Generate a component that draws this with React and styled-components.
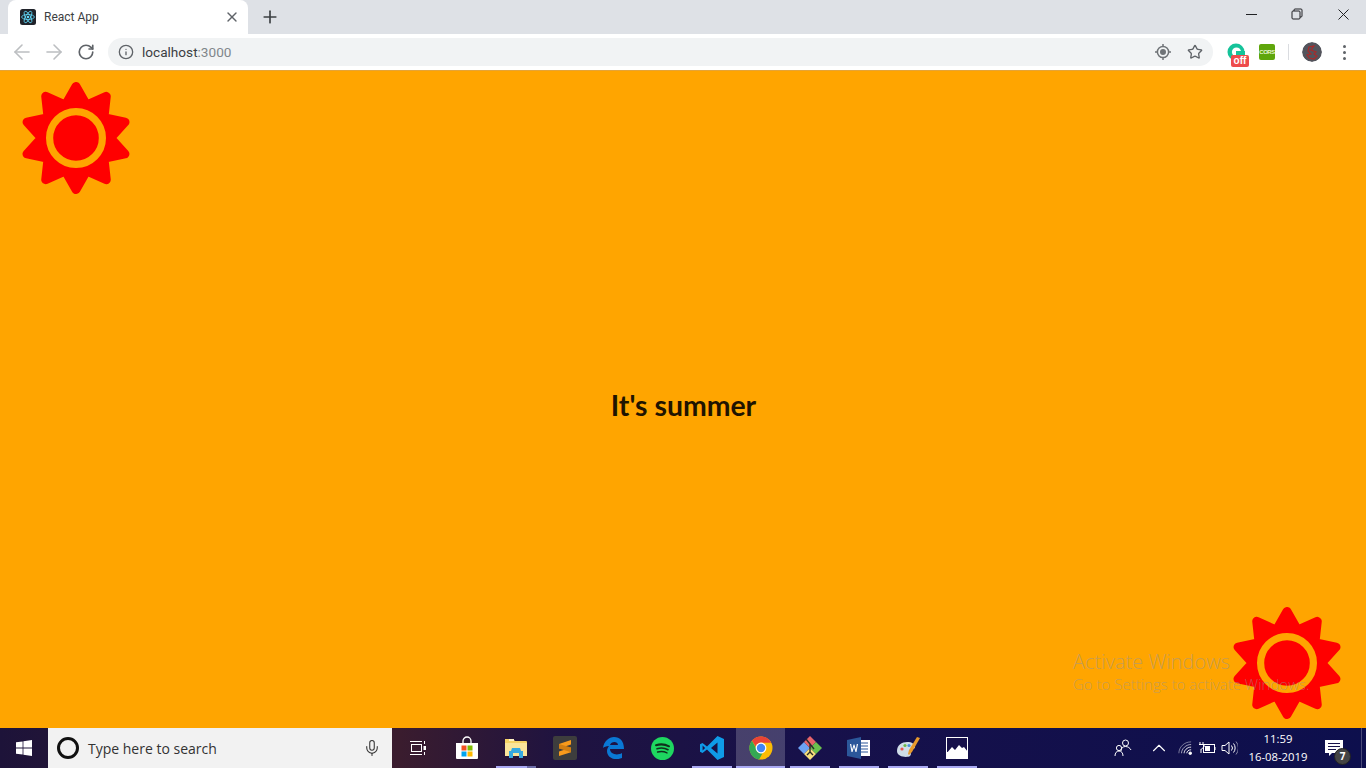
import React from 'react';
import styled, { createGlobalStyle } from 'styled-components';
import { ArrowLeft, ArrowRight, RotateCw, Info, Star, X, Plus, Mic, ChevronUp } from 'lucide-react';

const GlobalStyle = createGlobalStyle`
  html, body, #root {
    margin: 0;
    height: 100%;
    overflow: hidden;
  }
  body {
    font-family: "Open Sans", "Noto Sans", sans-serif;
  }
`;

const Screen = styled.div`
  height: 768px;
  display: flex;
  flex-direction: column;
`;

/* browser chrome */
const TabStrip = styled.div`
  height: 34px;
  flex: none;
  display: flex;
  align-items: center;
  padding-left: 8px;
  background: #dee1e6;
`;
const Tab = styled.div`
  position: relative;
  width: 240px;
  height: 34px;
  box-sizing: border-box;
  display: flex;
  align-items: center;
  gap: 8px;
  padding: 0 8px 0 12px;
  background: #fff;
  border-radius: 8px 8px 0 0;
`;
const TabTitle = styled.span`
  font-family: Roboto, sans-serif;
  font-size: 12px;
  color: #3c4043;
`;
const TabClose = styled.span`
  margin-left: auto;
  display: flex;
  color: #5f6368;
`;
const NewTab = styled.span`
  display: flex;
  margin-left: 12px;
  color: #3c4043;
`;
const WindowControls = styled.div`
  margin-left: auto;
  display: flex;
  align-self: stretch;
`;
const WindowButton = styled.div`
  width: 46px;
  display: flex;
  align-items: center;
  justify-content: center;
  padding-bottom: 6px;
`;
const Toolbar = styled.div`
  height: 36px;
  flex: none;
  box-sizing: border-box;
  display: flex;
  align-items: center;
  padding-left: 6px;
  background: #fff;
`;
const NavButton = styled.div`
  width: 32px;
  display: flex;
  justify-content: center;
  color: ${(p) => (p.$off ? '#bcbec1' : '#5f6368')};
`;
const AddressBar = styled.div`
  flex: 1;
  height: 28px;
  margin-left: 6px;
  display: flex;
  align-items: center;
  gap: 8px;
  padding: 0 10px;
  background: #f1f3f4;
  border-radius: 14px;
  color: #5f6368;
`;
const Url = styled.span`
  font-family: Roboto, sans-serif;
  font-size: 13.6px;
  color: #3c4043;
`;
const UrlPort = styled.span`
  color: #80868b;
`;
const AddressTools = styled.div`
  margin-left: auto;
  display: flex;
  gap: 16px;
  color: #5f6368;
`;
const ToolCluster = styled.div`
  width: 153px;
  flex: none;
  display: flex;
  align-items: center;
  padding-left: 9px;
  box-sizing: border-box;
`;
const ExtSlot = styled.div`
  position: relative;
  width: 28px;
  margin-right: 3px;
  display: flex;
  justify-content: center;
`;
const OffBadge = styled.span`
  position: absolute;
  right: 1px;
  bottom: -6px;
  width: 18px;
  height: 12px;
  border-radius: 2px;
  background: #ee4c4c;
  color: #fff;
  font: bold 10px/12px "Liberation Sans", sans-serif;
  text-align: center;
`;
const CorsBadge = styled.span`
  width: 16px;
  height: 16px;
  display: flex;
  align-items: center;
  justify-content: center;
  border-radius: 2px;
  background: #5fa60b;
  color: #e8f5d0;
  font: bold 6px/16px "Liberation Sans", sans-serif;
  letter-spacing: -0.5px;
`;
const Divider = styled.span`
  width: 1px;
  height: 16px;
  margin: 0 13px 0 4px;
  background: #dadce0;
`;
const Avatar = styled.div`
  width: 20px;
  height: 20px;
  border-radius: 50%;
  overflow: hidden;
  display: flex;
`;
const MenuDots = styled.div`
  margin-left: 21px;
  display: flex;
  flex-direction: column;
  gap: 3px;
`;
const Dot = styled.span`
  width: 3px;
  height: 3px;
  border-radius: 50%;
  background: #5f6368;
`;

/* page */
const Page = styled.main`
  position: relative;
  flex: 1;
  min-height: 0;
  display: grid;
  grid-template-rows: auto 1fr auto;
  padding: 11px 23px 9px 20px;
  background: #ffa500;
  border-top: 1px solid #e4a437;
  box-sizing: border-box;
`;
const SunBox = styled.div`
  display: flex;
  justify-self: ${(p) => p.$side};
`;
const Title = styled.h2`
  align-self: center;
  justify-self: center;
  margin: 8px 0 0 4px;
  font-family: Lato, sans-serif;
  font-size: 28.4px;
  font-weight: 700;
  line-height: 34px;
  color: #1f1400;
`;
const Watermark = styled.div`
  position: absolute;
  left: 1073px;
  top: 578px;
  color: rgba(150, 150, 150, 0.55);
  font-weight: 300;
  white-space: nowrap;
`;
const WatermarkHead = styled.div`
  font-size: 20px;
  line-height: 26px;
`;
const WatermarkSub = styled.div`
  font-size: 15px;
  line-height: 19px;
`;

/* taskbar */
const Taskbar = styled.footer`
  height: 40px;
  flex: none;
  display: flex;
  align-items: center;
  background: linear-gradient(90deg, #1d1339 0, #3a1c2e 400px, #1f1340 560px, #17114a 800px, #0d0f4d 1366px);
`;
const StartButton = styled.div`
  width: 48px;
  display: flex;
  justify-content: center;
`;
const SearchBox = styled.div`
  width: 344px;
  height: 40px;
  box-sizing: border-box;
  display: flex;
  align-items: center;
  gap: 9px;
  padding: 0 11px 0 9px;
  background: #f2f2f2;
  color: #333;
`;
const SearchRing = styled.span`
  width: 22px;
  height: 22px;
  box-sizing: border-box;
  border: 3px solid #111;
  border-radius: 50%;
`;
const SearchText = styled.span`
  font-size: 14px;
  color: #333;
`;
const MicSlot = styled.span`
  margin-left: auto;
  display: flex;
`;
const AppList = styled.div`
  display: flex;
  margin-left: 1px;
`;
const TaskItem = styled.div`
  position: relative;
  width: 49px;
  height: 40px;
  flex: none;
  display: flex;
  align-items: center;
  justify-content: center;
  background: ${(p) => (p.$active ? 'rgba(255,255,255,0.2)' : 'transparent')};
  &::after {
    content: '';
    display: ${(p) => (p.$open ? 'block' : 'none')};
    position: absolute;
    left: ${(p) => (p.$active ? '0' : '5px')};
    right: ${(p) => (p.$active ? '0' : '4px')};
    bottom: 0;
    height: 2px;
    background: ${(p) =>
      p.$stacked ? 'linear-gradient(90deg, #a9a9f2 78%, #6d6da8 78%)' : '#a9a9f2'};
  }
`;
const Tray = styled.div`
  margin-left: auto;
  display: flex;
  align-items: center;
  height: 40px;
  color: #fff;
`;
const TrayItem = styled.div`
  position: relative;
  width: ${(p) => p.$w}px;
  margin-left: ${(p) => p.$ml || 0}px;
  display: flex;
  justify-content: center;
`;
const Clock = styled.div`
  width: 64px;
  margin-left: 5px;
  text-align: center;
  font-size: 11.3px;
  line-height: 18px;
  color: #fff;
`;
const NoticeCount = styled.span`
  position: absolute;
  right: 6px;
  bottom: -9px;
  width: 15px;
  height: 15px;
  border-radius: 50%;
  border: 1px solid #222;
  background: #444;
  color: #fff;
  font: bold 10px/15px "Open Sans", sans-serif;
  text-align: center;
`;
const ShowDesktop = styled.div`
  width: 9px;
  height: 40px;
  box-sizing: border-box;
  position: relative;
  &::before {
    content: '';
    position: absolute;
    left: 4px;
    top: 0;
    bottom: 0;
    width: 1px;
    background: #4a4a78;
  }
`;

// ten pointed sun, corners get rounded by the round stroke
const sunPoints = Array.from({ length: 20 }, (_, i) => {
  const r = i % 2 === 0 ? 51.5 : 34.5;
  const a = ((i * 18 - 90) * Math.PI) / 180;
  return `${(56 + r * Math.cos(a)).toFixed(2)},${(56 + r * Math.sin(a)).toFixed(2)}`;
}).join(' ');

const Sun = () => (
  <svg width="112" height="112" viewBox="0 0 112 112">
    <polygon points={sunPoints} fill="#ff0000" stroke="#ff0000" strokeWidth="9" strokeLinejoin="round" />
    <circle cx="56" cy="56" r="26.4" fill="#ff0000" stroke="#ffa500" strokeWidth="7.2" />
  </svg>
);

const ReactFavicon = () => (
  <svg width="16" height="16" viewBox="0 0 16 16">
    <rect width="16" height="16" rx="2.5" fill="#20232a" />
    <g fill="none" stroke="#61dafb" strokeWidth="0.8">
      <ellipse cx="8" cy="8" rx="6.4" ry="2.5" />
      <ellipse cx="8" cy="8" rx="6.4" ry="2.5" transform="rotate(60 8 8)" />
      <ellipse cx="8" cy="8" rx="6.4" ry="2.5" transform="rotate(120 8 8)" />
    </g>
    <circle cx="8" cy="8" r="1.3" fill="#61dafb" />
  </svg>
);

const MinimizeIcon = () => (
  <svg width="11" height="11" viewBox="0 0 11 11">
    <rect x="0" y="5" width="11" height="1" fill="#202124" />
  </svg>
);

const RestoreIcon = () => (
  <svg width="12" height="12" viewBox="0 0 12 12" fill="none" stroke="#202124" strokeWidth="1">
    <rect x="1" y="3" width="8" height="8" rx="1" />
    <path d="M3 3V2a1 1 0 0 1 1-1h6a1 1 0 0 1 1 1v6a1 1 0 0 1-1 1H9" />
  </svg>
);

const CloseIcon = () => (
  <svg width="11" height="11" viewBox="0 0 11 11" fill="none" stroke="#202124" strokeWidth="1">
    <path d="M.5.5l10 10M10.500.5l-10 10" />
  </svg>
);

const LensIcon = () => (
  <svg width="16" height="16" viewBox="0 0 16 16">
    <circle cx="8" cy="8" r="5.6" fill="none" stroke="#6f7377" strokeWidth="1.5" />
    <circle cx="8" cy="8" r="3" fill="#6f7377" />
    <path d="M8 0v2.4M8 13.6V16M0 8h2.4M13.6 8H16" stroke="#6f7377" strokeWidth="1.5" />
  </svg>
);

const GrammarlyIcon = () => (
  <svg width="18" height="18" viewBox="0 0 18 18">
    <circle cx="9" cy="9" r="8.5" fill="#15c39a" />
    <circle cx="9.5" cy="9" r="4.6" fill="#fff" />
    <rect x="9" y="8" width="9" height="10" fill="#15c39a" />
  </svg>
);

const ProfileIcon = () => (
  <svg width="20" height="20" viewBox="0 0 20 20">
    <circle cx="10" cy="10" r="10" fill="#53545c" />
    <path d="M7 5l5-1-3 4 5 2-2 2 3 2-3 3-5-1-2-3 4-1-3-3z" fill="none" stroke="#a82a2a" strokeWidth="1.2" />
  </svg>
);

const WindowsLogo = () => (
  <svg width="16" height="16" viewBox="0 0 16 16" fill="#fff">
    <path d="M0 2.3l6.6-.9v6.2H0zM7.4 1.3L16 0v7.6H7.4zM0 8.4h6.6v6.2L0 13.7zM7.4 8.4H16V16l-8.6-1.2z" />
  </svg>
);

const TaskViewIcon = () => (
  <svg width="16" height="14" viewBox="0 0 16 14" fill="none" stroke="#fff" strokeWidth="1">
    <rect x="1.5" y="3.5" width="10" height="7" />
    <path d="M0 .5h12M0 13.5h12M14.5 0v3M14.5 11v3" />
    <rect x="13.500" y="5" width="2.500" height="4" fill="#fff" stroke="none" />
  </svg>
);

const StoreIcon = () => (
  <svg width="24" height="24" viewBox="0 0 24 24">
    <path d="M8 7V5a4 4 0 0 1 8 0v2" fill="none" stroke="#fff" strokeWidth="1.3" />
    <path d="M1 7h22v15a1 1 0 0 1-1 1H2a1 1 0 0 1-1-1z" fill="#fff" />
    <rect x="6.5" y="9.5" width="5" height="5" fill="#f25022" />
    <rect x="12.5" y="9.5" width="5" height="5" fill="#7fba00" />
    <rect x="6.5" y="15.5" width="5" height="5" fill="#00a4ef" />
    <rect x="12.5" y="15.5" width="5" height="5" fill="#ffb900" />
  </svg>
);

const ExplorerIcon = () => (
  <svg width="22" height="20" viewBox="0 0 22 20">
    <path d="M0 1h8l2 2h11a1 1 0 0 1 1 1v13a1 1 0 0 1-1 1H0z" fill="#f6d365" />
    <path d="M0 5h22v13H0z" fill="#fbe59a" />
    <path d="M4 1h5v2H4z" fill="#fff3c4" />
    <path d="M4 20v-7h2l1-3h8l1 3h2v7h-4v-5H8v5z" fill="#37a9e0" />
  </svg>
);

const SublimeIcon = () => (
  <svg width="24" height="24" viewBox="0 0 24 24">
    <rect width="24" height="24" rx="2" fill="#3d3d3d" />
    <path d="M18 4v4.6L6 12.4V8zM18 11.6v4.6L6 20v-4.6z" fill="#f89a1c" />
    <path d="M6 8l12 3.6v4.6L6 12.4z" fill="#d27e12" />
  </svg>
);

const EdgeIcon = () => (
  <svg width="21" height="22" viewBox="0 0 21 22">
    <path d="M0 11C1 4 6 0 11 0c6 0 10 4 10 12H7c0 5 7 7 12 4v5c-7 3-15 0-15-7 0-2 1-4 2-5-3 0-5 1-6 2zM7 8h8c0-4-7-4-8 0z" fill="#0a78d4" />
  </svg>
);

const SpotifyIcon = () => (
  <svg width="23" height="23" viewBox="0 0 23 23">
    <circle cx="11.5" cy="11.5" r="11.5" fill="#1ed760" />
    <g fill="none" stroke="#10301c" strokeLinecap="round">
      <path d="M5 8.2c4-1.2 9-1 13 1.1" strokeWidth="2" />
      <path d="M6 11.7c3.5-1 8-.7 11 1" strokeWidth="1.7" />
      <path d="M6.6 15c3-.8 6.5-.6 9.4.9" strokeWidth="1.4" />
    </g>
  </svg>
);

const VscodeIcon = () => (
  <svg width="24" height="24" viewBox="0 0 24 24">
    <path d="M17.5 0L24 3v18l-6.5 3L7 13.6 2.5 17 0 15.8V8.2L2.5 7 7 10.4zM17.5 6.5L11 12l6.5 5.5zM2.6 9.5v5l2.5-2.5z" fill="#0f9be8" />
  </svg>
);

const ChromeIcon = () => (
  <svg width="24" height="24" viewBox="0 0 24 24">
    <circle cx="12" cy="12" r="11.5" fill="#fbbc05" />
    <path d="M12 .5a11.5 11.5 0 0 1 10.2 6.2H12A5.4 5.4 0 0 0 6.8 10.5L2.9 4.8A11.5 11.5 0 0 1 12 .5z" fill="#ea4335" />
    <path d="M2.9 4.8l5 8.6a5 5 0 0 0 5.6 3.8l-3.4 6.2A11.5 11.5 0 0 1 2.9 4.8z" fill="#34a853" />
    <circle cx="12" cy="12" r="5.4" fill="#fff" />
    <circle cx="12" cy="12" r="4.2" fill="#4285f4" />
  </svg>
);

const GitIcon = () => (
  <svg width="24" height="24" viewBox="0 0 24 24">
    <path d="M6 6l6 6-6 6-6-6z" fill="#6ca2f4" />
    <path d="M12 0l6 6-6 6-6-6z" fill="#e8646a" />
    <path d="M18 6l6 6-6 6-6-6z" fill="#6ac04d" />
    <path d="M12 12l6 6-6 6-6-6z" fill="#f7e07c" />
    <path d="M8 3l4 5v8M12 8l4 5M12 16l-3 3M12 16l3 3" stroke="#2a2a2a" strokeWidth="1.4" fill="none" />
  </svg>
);

const WordIcon = () => (
  <svg width="23" height="22" viewBox="0 0 23 22">
    <rect x="8" y="3" width="15" height="16" fill="#fff" />
    <path d="M14 6h7M14 9h7M14 12h7M14 15h7" stroke="#2b579a" strokeWidth="1.2" />
    <path d="M0 3l14-3v22L0 19z" fill="#2b579a" />
    <path d="M3 7l1.5 8h1l1.5-5 1.5 5h1L11 7H9.8l-.9 5.4L7.4 7.6H6.6l-1.5 4.8L4.2 7z" fill="#fff" />
  </svg>
);

const PaintIcon = () => (
  <svg width="24" height="24" viewBox="0 0 24 24">
    <path d="M1 15C1 9 6 6 11 6c5 0 8 2 8 5 0 2-3 2-4 3-1 2 1 4-1 6-3 2-13 1-13-5z" fill="#cfdde8" />
    <circle cx="6" cy="13" r="1.6" fill="#e8554e" />
    <circle cx="9" cy="9.5" r="1.6" fill="#6cb84a" />
    <circle cx="13" cy="9.5" r="1.6" fill="#4a90d9" />
    <path d="M21 1l3 1-8 14-3 3-1-1 1-4z" fill="#e89a2c" />
  </svg>
);

const PhotosIcon = () => (
  <svg width="22" height="22" viewBox="0 0 22 22">
    <rect width="22" height="22" fill="#fff" />
    <rect x="1" y="1" width="20" height="14" fill="#17114a" />
    <path d="M0 17l6-7 3 3 4-5 3 3 2-1 4 5v7H0z" fill="#fff" />
  </svg>
);

const PeopleIcon = () => (
  <svg width="18" height="18" viewBox="0 0 18 18" fill="none" stroke="#fff" strokeWidth="1">
    <circle cx="11.5" cy="4" r="3" />
    <path d="M7 12c0-3 2-4.500 4.500-4.500S16 9 17 11" />
    <circle cx="5" cy="9" r="2.600" />
    <path d="M1 17c0-3 1.500-5 4-5s4 2 4 5" />
  </svg>
);

const WifiIcon = () => (
  <svg width="14" height="14" viewBox="0 0 16 16" fill="none" stroke="#fff" strokeWidth="1">
    <path d="M1 14C1 7 7 1 15 1" opacity="0.5" />
    <path d="M4 14c0-5 5-10 11-10" opacity="0.7" />
    <path d="M7 14c0-3 3-7 8-7" />
    <path d="M10 14c0-2 2-4 5-4" />
    <circle cx="14" cy="14" r="1.500" fill="#fff" />
  </svg>
);

const BatteryIcon = () => (
  <svg width="17" height="12" viewBox="0 0 17 12" fill="none" stroke="#fff" strokeWidth="1">
    <rect x="4.500" y="2.500" width="11" height="8" />
    <rect x="6" y="4" width="5" height="5" fill="#fff" stroke="none" />
    <path d="M16 5v3M1 0v2M4 0v2M0 2.500h5V5L2.500 7H2v4" />
  </svg>
);

const VolumeIcon = () => (
  <svg width="17" height="16" viewBox="0 0 17 16" fill="none" stroke="#fff" strokeWidth="1">
    <path d="M1 5.500h3L8 2v12l-4-3.500H1z" />
    <path d="M10.500 5.500a4 4 0 0 1 0 5" />
    <path d="M12.500 3.500a7 7 0 0 1 0 9" />
    <path d="M15 1.500a10 10 0 0 1 0 13" opacity="0.5" />
  </svg>
);

const NoticeIcon = () => (
  <svg width="18" height="16" viewBox="0 0 18 16">
    <path d="M0 0h18v13H7l-3 3v-3H0z" fill="#fff" />
    <path d="M3 3.500h12M3 6.500h12M3 9.500h8" stroke="#17114a" strokeWidth="1" />
  </svg>
);

const apps = [
  { id: 'view', icon: <TaskViewIcon /> },
  { id: 'store', icon: <StoreIcon /> },
  { id: 'explorer', icon: <ExplorerIcon />, open: true, stacked: true },
  { id: 'sublime', icon: <SublimeIcon /> },
  { id: 'edge', icon: <EdgeIcon /> },
  { id: 'spotify', icon: <SpotifyIcon /> },
  { id: 'vscode', icon: <VscodeIcon />, open: true },
  { id: 'chrome', icon: <ChromeIcon />, open: true, active: true },
  { id: 'git', icon: <GitIcon />, open: true },
  { id: 'word', icon: <WordIcon />, open: true },
  { id: 'paint', icon: <PaintIcon />, open: true },
  { id: 'photos', icon: <PhotosIcon />, open: true },
];

const App = () => {
  return (
    <Screen>
      <GlobalStyle />
      <TabStrip>
        <Tab>
          <ReactFavicon />
          <TabTitle>React App</TabTitle>
          <TabClose><X size={16} strokeWidth={2} /></TabClose>
        </Tab>
        <NewTab><Plus size={20} strokeWidth={2} /></NewTab>
        <WindowControls>
          <WindowButton><MinimizeIcon /></WindowButton>
          <WindowButton><RestoreIcon /></WindowButton>
          <WindowButton><CloseIcon /></WindowButton>
        </WindowControls>
      </TabStrip>
      <Toolbar>
        <NavButton $off><ArrowLeft size={24} strokeWidth={1.6} /></NavButton>
        <NavButton $off><ArrowRight size={24} strokeWidth={1.6} /></NavButton>
        <NavButton><RotateCw size={18} strokeWidth={2.2} /></NavButton>
        <AddressBar>
          <Info size={16} strokeWidth={2} />
          <Url>localhost<UrlPort>:3000</UrlPort></Url>
          <AddressTools>
            <LensIcon />
            <Star size={16} strokeWidth={2} />
          </AddressTools>
        </AddressBar>
        <ToolCluster>
          <ExtSlot>
            <GrammarlyIcon />
            <OffBadge>off</OffBadge>
          </ExtSlot>
          <ExtSlot><CorsBadge>CORS</CorsBadge></ExtSlot>
          <Divider />
          <Avatar><ProfileIcon /></Avatar>
          <MenuDots><Dot /><Dot /><Dot /></MenuDots>
        </ToolCluster>
      </Toolbar>
      <Page>
        <SunBox $side="start"><Sun /></SunBox>
        <Title>It's summer</Title>
        <SunBox $side="end"><Sun /></SunBox>
        <Watermark>
          <WatermarkHead>Activate Windows</WatermarkHead>
          <WatermarkSub>Go to Settings to activate Windows.</WatermarkSub>
        </Watermark>
      </Page>
      <Taskbar>
        <StartButton><WindowsLogo /></StartButton>
        <SearchBox>
          <SearchRing />
          <SearchText>Type here to search</SearchText>
          <MicSlot><Mic size={18} strokeWidth={1.4} /></MicSlot>
        </SearchBox>
        <AppList>
          {apps.map((app) => (
            <TaskItem key={app.id} $open={app.open} $active={app.active} $stacked={app.stacked}>
              {app.icon}
            </TaskItem>
          ))}
        </AppList>
        <Tray>
          <TrayItem $w={36}><PeopleIcon /></TrayItem>
          <TrayItem $w={30} $ml={3}><ChevronUp size={22} strokeWidth={1.2} /></TrayItem>
          <TrayItem $w={22}><WifiIcon /></TrayItem>
          <TrayItem $w={22}><BatteryIcon /></TrayItem>
          <TrayItem $w={23}><VolumeIcon /></TrayItem>
          <Clock>11:59<br />16-08-2019</Clock>
          <TrayItem $w={47}>
            <NoticeIcon />
            <NoticeCount>7</NoticeCount>
          </TrayItem>
          <ShowDesktop />
        </Tray>
      </Taskbar>
    </Screen>
  );
};

export default App;
